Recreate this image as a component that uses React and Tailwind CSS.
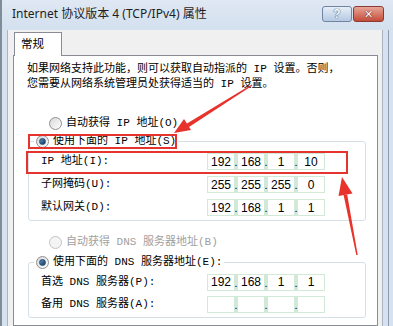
import React from 'react'

function Radio({ checked = false, disabled = false }) {
    return (
        <span className={`w-[13px] h-[13px] rounded-full border flex items-center justify-center shrink-0 ${disabled ? 'border-[#c4c4c4] bg-[#f4f4f4]' : 'border-[#8e8f8f] bg-gradient-to-br from-[#d8d8d8] to-[#ffffff]'}`}>
            {checked && <span className="w-[7px] h-[7px] rounded-full bg-gradient-to-br from-[#5a8fc0] to-[#173a5c] border border-[#1f4a74]" />}
        </span>
    )
}

function IpField({ parts }) {
    // green frame with four white segments, dots in the gaps
    return (
        <div className="flex items-center h-[17px] w-[118px] bg-[#d3e9d7] p-px font-['Liberation_Sans',sans-serif] text-[12px] text-black">
            {parts.map((p, i) => (
                <React.Fragment key={i}>
                    {i > 0 && <span className="w-[4px] h-full flex items-end justify-center leading-[13px] text-[11px]">.</span>}
                    <span className="w-[26px] h-full bg-white flex items-center justify-center leading-none">{p}</span>
                </React.Fragment>
            ))}
        </div>
    )
}

function Row({ label, parts, h = 'h-[23px]' }) {
    return (
        <div className={`flex items-center ${h} pl-[12px]`}>
            <span className="w-[166px]">{label}</span>
            <IpField parts={parts} />
        </div>
    )
}

export default function App() {
    return (
        <div className="relative w-[393px] h-[326px] overflow-hidden flex flex-col bg-[#d6e2ef] border-l-2 border-[#7f8c9a] font-['Liberation_Mono','Noto_Sans_CJK_SC',monospace] text-[11px] text-black">
            {/* title bar */}
            <div className="h-[30px] shrink-0 flex items-center pl-[10px] bg-gradient-to-b from-[#dfe8f3] to-[#d3e0ee]">
                <span className="font-['Noto_Sans','Noto_Sans_CJK_SC',sans-serif] text-[12px] text-[#1e1e1e] -mt-[2px]">Internet 协议版本 4 (TCP/IPv4) 属性</span>
                <div className="ml-auto mr-[9px] flex gap-px -mt-[2px]">
                    <div className="w-[30px] h-[16px] rounded-[3px] border border-[#6f84a2] bg-gradient-to-b from-[#e6eef8] to-[#b5c9e2] flex items-center justify-center font-['Liberation_Sans',sans-serif] text-[12px] font-bold text-white leading-none [text-shadow:0_0_1px_#34465e,0_0_1px_#34465e]">?</div>
                    <div className="w-[31px] h-[16px] rounded-[3px] border border-[#8b3b31] bg-gradient-to-b from-[#e7a598] to-[#c34a39] flex items-center justify-center font-['DejaVu_Sans',sans-serif] text-[11px] font-bold text-white leading-none [text-shadow:0_0_1px_#5a1a12,0_0_1px_#5a1a12]">✕</div>
                </div>
            </div>

            {/* body */}
            <div className="flex flex-1 min-h-0">
                <div className="w-[5px] shrink-0" />
                <div className="flex-1 bg-[#f0f0f0] border-l border-r border-[#aab4c0] pl-[5px] pr-[4px] flex flex-col">
                    <div className="mt-[2px] ml-[1px] w-[48px] h-[24px] bg-white border border-b-0 border-[#898c95] relative z-10 -mb-px pl-[6px] pt-[3px] text-[11.5px]">常规</div>
                    <div className="flex-1 bg-white border border-[#898c95] pl-[13px] pr-[11px]">
                        <p className="mt-[6px] leading-[15px] whitespace-nowrap">如果网络支持此功能，则可以获取自动指派的 IP 设置。否则，<br />您需要从网络系统管理员处获得适当的 IP 设置。</p>

                        <div className="mt-[22px] h-[18px] flex items-center gap-[4px] pl-[22px]">
                            <Radio />
                            <span>自动获得 IP 地址(O)</span>
                        </div>

                        <div className="mt-[9px] ml-px border border-[#d5dfe5] rounded-[3px] pb-px">
                            <div className="-mt-[10px] ml-[5px] h-[18px] w-fit bg-white px-[2px] flex items-center gap-[4px]">
                                <Radio checked />
                                <span>使用下面的 IP 地址(S)</span>
                            </div>
                            <Row label="IP 地址(I):" parts={['192', '168', '1', '10']} />
                            <Row label="子网掩码(U):" parts={['255', '255', '255', '0']} />
                            <Row label="默认网关(D):" parts={['192', '168', '1', '1']} />
                        </div>

                        <div className="mt-[12px] h-[18px] flex items-center gap-[4px] pl-[22px] text-[#a0a0a0]">
                            <Radio disabled />
                            <span>自动获得 DNS 服务器地址(B)</span>
                        </div>

                        <div className="mt-[11px] ml-px border border-[#d5dfe5] rounded-[3px] pb-[2px]">
                            <div className="-mt-[10px] ml-[5px] h-[18px] w-fit bg-white px-[2px] flex items-center gap-[4px]">
                                <Radio checked />
                                <span>使用下面的 DNS 服务器地址(E):</span>
                            </div>
                            <Row label="首选 DNS 服务器(P):" parts={['192', '168', '1', '1']} h="h-[22px]" />
                            <Row label="备用 DNS 服务器(A):" parts={['', '', '', '']} h="h-[22px]" />
                        </div>
                    </div>
                </div>
                <div className="w-[10px] shrink-0 flex">
                    <div className="w-[5px]" />
                    <div className="w-px bg-[#8d9bb0]" />
                </div>
            </div>

            {/* red annotation boxes */}
            <div className="absolute left-[26px] top-[134px] w-[149px] h-[15px] border-2 border-[#e5332d]" />
            <div className="absolute left-[24px] top-[151px] w-[322px] h-[23px] border-2 border-[#e5332d]" />

            {/* red arrows */}
            <svg className="absolute left-0 top-0 pointer-events-none" width="393" height="326" viewBox="0 0 393 326">
                <polygon points="249.6,84.4 250.4,85.6 186.6,127.2 184.6,123.8" fill="#e8322c" />
                <polygon points="172,133 189,130 182,119" fill="#e8322c" />
                <polygon points="354.3,255.1 355.7,254.9 345.2,194.4 341.6,195.1" fill="#e8322c" />
                <polygon points="340,177 350.5,193.5 336.5,196" fill="#e8322c" />
            </svg>
        </div>
    )
}
